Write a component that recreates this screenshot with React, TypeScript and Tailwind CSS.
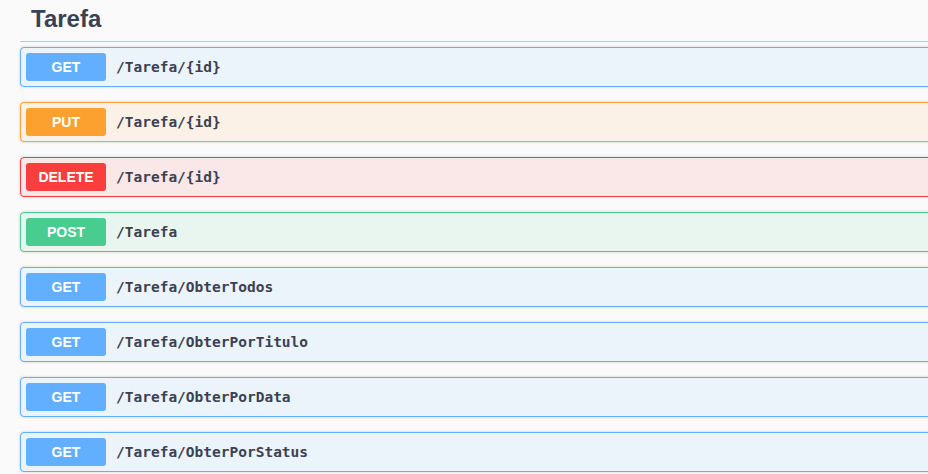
import React from 'react';

type Method = 'GET' | 'PUT' | 'DELETE' | 'POST';

const styles: Record<Method, { row: string; badge: string }> = {
  GET: { row: 'border-[#61affe] bg-[#ebf3fb]', badge: 'bg-[#61affe]' },
  PUT: { row: 'border-[#fca130] bg-[#fbf1e6]', badge: 'bg-[#fca130]' },
  DELETE: { row: 'border-[#f93e3e] bg-[#fae7e7]', badge: 'bg-[#f93e3e]' },
  POST: { row: 'border-[#49cc90] bg-[#e8f6ef]', badge: 'bg-[#49cc90]' },
};

const endpoints: { method: Method; path: string }[] = [
  { method: 'GET', path: '/Tarefa/{id}' },
  { method: 'PUT', path: '/Tarefa/{id}' },
  { method: 'DELETE', path: '/Tarefa/{id}' },
  { method: 'POST', path: '/Tarefa' },
  { method: 'GET', path: '/Tarefa/ObterTodos' },
  { method: 'GET', path: '/Tarefa/ObterPorTitulo' },
  { method: 'GET', path: '/Tarefa/ObterPorData' },
  { method: 'GET', path: '/Tarefa/ObterPorStatus' },
];

function Operation({ method, path }: { method: Method; path: string }) {
  const s = styles[method];
  return (
    <div className={`mb-[15px] flex h-[40px] items-center rounded-[4px] border px-[5px] shadow-[0_0_3px_rgba(0,0,0,0.19)] ${s.row}`}>
      <span
        className={`flex h-[28px] w-[80px] items-center justify-center rounded-[3px] text-[14px] font-bold text-white ${s.badge}`}
        style={{ fontFamily: '"Liberation Sans", Arial, sans-serif' }}
      >
        {method}
      </span>
      <span
        className="px-[10px] pt-[1px] text-[14.5px] font-bold text-[#3b4151]"
        style={{ fontFamily: '"DejaVu Sans Mono", monospace' }}
      >
        {path}
      </span>
    </div>
  );
}

export default function App() {
  return (
    <div className="h-[474px] w-[928px] overflow-hidden bg-[#fafafa]">
      <div className="ml-[20px] w-[960px]">
        <h3
          className="mb-[5px] flex h-[42px] items-center border-b border-[#c4c6cb] pb-[4px] pl-[11px] text-[24px] font-bold text-[#3b4151]"
          style={{ fontFamily: '"Liberation Sans", Arial, sans-serif' }}
        >
          Tarefa
        </h3>
        {endpoints.map((e, i) => (
          <Operation key={i} method={e.method} path={e.path} />
        ))}
      </div>
    </div>
  );
}
